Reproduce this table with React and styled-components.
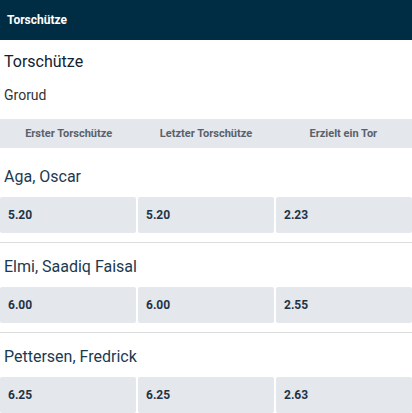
import React from "react";
import styled, { createGlobalStyle } from "styled-components";

const GlobalStyle = createGlobalStyle`
    body {
        margin: 0;
        background: #fff;
        font-family: Roboto, "Liberation Sans", sans-serif;
    }
`;

const Page = styled.div`
    width: 412px;
`;

const TopBar = styled.div`
    height: 40px;
    background: #002d44;
    display: flex;
    align-items: center;
    padding: 0 7px;
    color: #fff;
    font-size: 12px;
    font-weight: 700;
`;

const Title = styled.h2`
    margin: 0;
    padding: 12px 4px 0;
    height: 28px;
    font-size: 16px;
    font-weight: 400;
    color: #13222e;
    line-height: 20px;
`;

const Team = styled.div`
    padding: 8px 4px 0;
    height: 39px;
    box-sizing: border-box;
    font-size: 14px;
    color: #333;
    line-height: 14px;
`;

const ColumnBar = styled.div`
    display: grid;
    grid-template-columns: repeat(3, 1fr);
    height: 29px;
    background: #e4e7eb;
    align-items: center;
    text-align: center;
    font-size: 11px;
    font-weight: 700;
    color: #59616b;
`;

const Player = styled.div`
    border-top: ${(p) => (p.first ? "none" : "1.5px solid #dcdcdc")};
    padding-bottom: 9px;
`;

const Name = styled.div`
    height: ${(p) => (p.first ? "49px" : "44px")};
    display: flex;
    align-items: center;
    padding: ${(p) => (p.first ? "8px 4px 0" : "3px 4px 0")};
    box-sizing: border-box;
    font-size: 16px;
    color: #1b3a50;
`;

const OddsRow = styled.div`
    display: grid;
    grid-template-columns: repeat(3, 1fr);
    gap: 2px;
`;

const Odd = styled.div`
    height: 36px;
    background: #e4e7eb;
    border-radius: 2px;
    display: flex;
    align-items: center;
    padding-left: 8px;
    font-size: 12px;
    font-weight: 700;
    color: #1f3447;
`;

const players = [
    { name: "Aga, Oscar", odds: ["5.20", "5.20", "2.23"] },
    { name: "Elmi, Saadiq Faisal", odds: ["6.00", "6.00", "2.55"] },
    { name: "Pettersen, Fredrick", odds: ["6.25", "6.25", "2.63"] },
];

export default function App() {
    return (
        <Page>
            <GlobalStyle />
            <TopBar>Torschütze</TopBar>
            <Title>Torschütze</Title>
            <Team>Grorud</Team>
            <ColumnBar>
                <span>Erster Torschütze</span>
                <span>Letzter Torschütze</span>
                <span>Erzielt ein Tor</span>
            </ColumnBar>
            {players.map((p, i) => (
                <Player key={p.name} first={i === 0}>
                    <Name first={i === 0}>{p.name}</Name>
                    <OddsRow>
                        {p.odds.map((o, j) => (
                            <Odd key={j}>{o}</Odd>
                        ))}
                    </OddsRow>
                </Player>
            ))}
        </Page>
    );
}
